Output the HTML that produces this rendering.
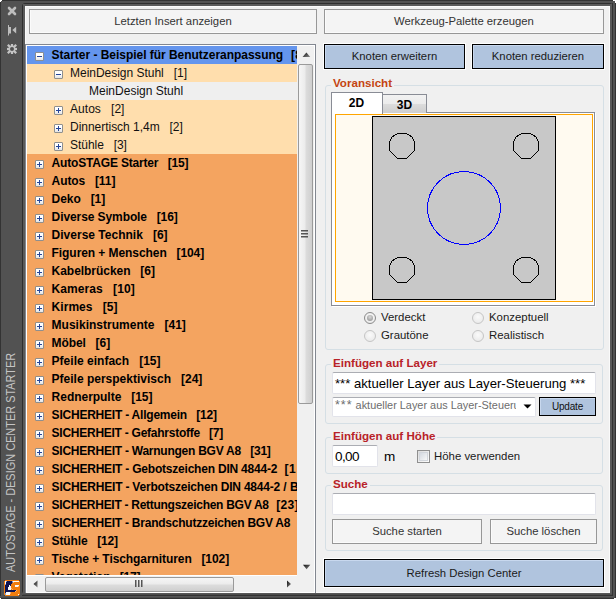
<!DOCTYPE html>
<html><head><meta charset="utf-8">
<style>
*{margin:0;padding:0;box-sizing:border-box}
html,body{width:616px;height:599px;overflow:hidden;background:#fff}
body{position:relative;font-family:"Liberation Sans",sans-serif}
.abs{position:absolute}
#frame{position:absolute;left:0;top:0;width:616px;height:599px;background:#525252;border-radius:4px 4px 0 4px}
#strip{position:absolute;left:0;top:0;width:22px;height:599px;background:#525252;border-left:1px solid #3a3a3a;border-top:1px solid #333;border-top-left-radius:3px}
#panel{position:absolute;left:25px;top:6px;width:585px;height:587px;background:#f0f0f0;border:1px solid #fafafa}
.fr{position:absolute}
/* buttons */
.btn{position:absolute;border:1px solid #979797;background:#f4f4f4;box-shadow:inset 1px 0 0 #fbfbfb,inset 0 -1px 0 #fbfbfb;color:#333;font-size:11.3px;text-align:center;white-space:nowrap}
.bbtn{position:absolute;border:1px solid #000;background:#b0c4de;box-shadow:0 0 0 1px #fff, inset 1px 1px 0 #c8d8ee;color:#1a1a1a;font-size:11.3px;text-align:center;white-space:nowrap}
/* tree */
#tree{position:absolute;left:25px;top:44px;width:291px;height:549px;border:1px solid #828790;border-bottom:none;background:#fff;overflow:hidden}
#tree .inner{position:absolute;left:1px;top:1px;width:270px;height:529px;overflow:hidden;background:#fff}
.row{position:absolute;left:0;width:270px;height:18px;white-space:pre}
.rsel{background:#6495ed}
.rlo{background:#ffdead}
.rgray{background:#efefef}
.ror{background:#f4a460}
.t{position:absolute;top:0;line-height:18px;color:#000}
.t.b{font-weight:bold;font-size:12px}
.t.n{font-size:12px;color:#111}
.ex{position:absolute;top:6px;width:9px;height:9px;border:1px solid #8e8f8f;border-radius:1px;background:linear-gradient(#fff,#fff 40%,#e4e4e4)}
.ex .h{position:absolute;left:1px;top:3px;width:5px;height:1px;background:#24459a}
.ex .v{position:absolute;left:3px;top:1px;width:1px;height:5px;background:#24459a}
/* scrollbars */
#vs{position:absolute;left:271px;top:1px;width:17px;height:530px;background:#f0f0f0}
#hs{position:absolute;left:1px;top:531px;width:270px;height:16px;background:#f0f0f0}
#corner{position:absolute;left:271px;top:531px;width:17px;height:16px;background:#f0f0f0}
.thumbv{position:absolute;left:1px;width:15px;border:1px solid #9a9a9a;border-radius:2px;background:linear-gradient(90deg,#f6f6f6,#ececec 45%,#dcdcdc 55%,#cfcfcf)}
.thumbh{position:absolute;top:1px;height:15px;border:1px solid #9a9a9a;border-radius:2px;background:linear-gradient(#f6f6f6,#ececec 45%,#dcdcdc 55%,#cfcfcf)}
/* group boxes */
.grp{position:absolute;border:1px solid #d5dfe5;border-radius:3px}
.glab{position:absolute;font-weight:bold;font-size:11.6px;background:#f0f0f0;padding:0 2px;white-space:nowrap;line-height:14px}
.tb{position:absolute;background:#fff;border:1px solid #e2e3ea;border-top-color:#abadb3;border-radius:2px}
.lbl{position:absolute;font-size:11.4px;color:#1a1a1a;white-space:nowrap;line-height:14px}
.radio{position:absolute;width:12px;height:12px;border-radius:50%;border:1px solid #c5c5c5;background:radial-gradient(circle at 50% 40%,#fafafa,#e6e6e6)}
</style></head><body>
<div id="frame"></div>
<!-- frame lines -->
<div class="fr" style="left:0;top:0;width:616px;height:1px;background:#333"></div>
<div class="fr" style="left:0;top:0;width:1px;height:599px;background:#333"></div>
<div class="fr" style="left:22px;top:3px;width:591px;height:591px;border:1px solid #2e2e2e;border-radius:3px 3px 3px 3px"></div>
<div class="fr" style="left:23px;top:4px;width:589px;height:589px;border:2px solid #5a5a5a;border-width:2px 2px 1px 2px"></div>
<div class="fr" style="left:23px;top:593px;width:589px;height:1px;background:#585858"></div>
<div class="fr" style="left:23px;top:594px;width:589px;height:1px;background:#4c4c4c"></div>
<div class="fr" style="left:22px;top:595px;width:591px;height:1px;background:#333"></div>
<div class="fr" style="left:0;top:596px;width:616px;height:1px;background:#555"></div>
<div class="fr" style="left:0;top:597px;width:616px;height:1px;background:#4a4a4a"></div>
<div class="fr" style="left:0;top:598px;width:616px;height:1px;background:#333"></div>
<div class="fr" style="left:612px;top:3px;width:1px;height:593px;background:#333"></div>
<div class="fr" style="left:615px;top:0;width:1px;height:599px;background:#333"></div>
<!-- white corner pixels -->
<div class="fr" style="left:0;top:0;width:2px;height:1px;background:#fff"></div>
<div class="fr" style="left:0;top:0;width:1px;height:2px;background:#fff"></div>
<div class="fr" style="left:613px;top:0;width:3px;height:1px;background:#fff"></div>
<div class="fr" style="left:615px;top:0;width:1px;height:3px;background:#fff"></div>
<div class="fr" style="left:614px;top:598px;width:2px;height:1px;background:#fff"></div>
<div class="fr" style="left:0;top:598px;width:1px;height:1px;background:#fff"></div>

<!-- strip icons -->
<svg class="abs" style="left:0;top:0" width="22" height="60">
 <g stroke="#bdbdbd" stroke-width="2.6" stroke-linecap="round">
  <line x1="9" y1="8" x2="15" y2="14"/><line x1="15" y1="8" x2="9" y2="14"/>
 </g>
 <rect x="10.5" y="9.5" width="3" height="3" fill="#bdbdbd"/>
 <rect x="8" y="25" width="1" height="10.5" fill="#bdbdbd"/>
 <rect x="8" y="27" width="3" height="6.5" fill="#bdbdbd"/>
 <polygon points="16.2,26.8 16.2,33.5 12.3,30.1" fill="#bdbdbd"/>
 <g fill="none" stroke="#c4c4c4" stroke-width="1.4">
  <circle cx="12" cy="49" r="2.7"/>
 </g>
 <g stroke="#c4c4c4" stroke-width="2.2" stroke-linecap="butt">
  <line x1="12" y1="44" x2="12" y2="46.5"/><line x1="12" y1="51.5" x2="12" y2="54"/>
  <line x1="7" y1="49" x2="9.5" y2="49"/><line x1="14.5" y1="49" x2="17" y2="49"/>
  <line x1="7.8" y1="44.8" x2="10.1" y2="47.1"/><line x1="13.9" y1="50.9" x2="16.2" y2="53.2"/>
  <line x1="16.2" y1="44.8" x2="13.9" y2="47.1"/><line x1="10.1" y1="50.9" x2="7.8" y2="53.2"/>
 </g>
</svg>
<div class="abs" style="left:5px;top:572px;width:0;height:0">
 <div style="position:absolute;left:0;top:0;transform-origin:0 0;transform:rotate(-90deg) scaleX(0.875);font-size:12.5px;color:#c4c4c4;white-space:nowrap;line-height:12px;top:0">AUTOSTAGE - DESIGN CENTER STARTER</div>
</div>
<!-- logo -->
<svg class="abs" style="left:4px;top:580px" width="16" height="16" shape-rendering="crispEdges"><rect x="0" y="0" width="1" height="1" fill="#3a4450"/><rect x="1" y="0" width="14" height="1" fill="#f07d0e"/><rect x="15" y="0" width="1" height="1" fill="#3a4450"/><rect x="0" y="1" width="1" height="1" fill="#f07d0e"/><rect x="1" y="1" width="1" height="1" fill="#fbfbfb"/><rect x="2" y="1" width="1" height="1" fill="#8aa4d4"/><rect x="3" y="1" width="5" height="1" fill="#0e1452"/><rect x="8" y="1" width="1" height="1" fill="#8aa4d4"/><rect x="9" y="1" width="6" height="1" fill="#fbfbfb"/><rect x="15" y="1" width="1" height="1" fill="#f07d0e"/><rect x="0" y="2" width="1" height="1" fill="#f07d0e"/><rect x="1" y="2" width="1" height="1" fill="#fbfbfb"/><rect x="2" y="2" width="6" height="1" fill="#0e1452"/><rect x="8" y="2" width="1" height="1" fill="#5a5f8a"/><rect x="9" y="2" width="1" height="1" fill="#f6b070"/><rect x="10" y="2" width="6" height="1" fill="#f07d0e"/><rect x="0" y="3" width="1" height="1" fill="#f07d0e"/><rect x="1" y="3" width="1" height="1" fill="#fbfbfb"/><rect x="2" y="3" width="6" height="1" fill="#0e1452"/><rect x="8" y="3" width="8" height="1" fill="#f07d0e"/><rect x="0" y="4" width="1" height="1" fill="#f07d0e"/><rect x="1" y="4" width="1" height="1" fill="#8aa4d4"/><rect x="2" y="4" width="5" height="1" fill="#0e1452"/><rect x="7" y="4" width="9" height="1" fill="#f07d0e"/><rect x="0" y="5" width="1" height="1" fill="#f07d0e"/><rect x="1" y="5" width="4" height="1" fill="#0e1452"/><rect x="5" y="5" width="1" height="1" fill="#fbfbfb"/><rect x="6" y="5" width="1" height="1" fill="#0e1452"/><rect x="7" y="5" width="4" height="1" fill="#f07d0e"/><rect x="11" y="5" width="4" height="1" fill="#fbfbfb"/><rect x="15" y="5" width="1" height="1" fill="#f07d0e"/><rect x="0" y="6" width="1" height="1" fill="#f07d0e"/><rect x="1" y="6" width="4" height="1" fill="#0e1452"/><rect x="5" y="6" width="2" height="1" fill="#fbfbfb"/><rect x="7" y="6" width="4" height="1" fill="#f07d0e"/><rect x="11" y="6" width="3" height="1" fill="#fbfbfb"/><rect x="14" y="6" width="1" height="1" fill="#f6b070"/><rect x="15" y="6" width="1" height="1" fill="#f07d0e"/><rect x="0" y="7" width="1" height="1" fill="#f07d0e"/><rect x="1" y="7" width="3" height="1" fill="#0e1452"/><rect x="4" y="7" width="3" height="1" fill="#fbfbfb"/><rect x="7" y="7" width="9" height="1" fill="#f07d0e"/><rect x="0" y="8" width="1" height="1" fill="#f07d0e"/><rect x="1" y="8" width="3" height="1" fill="#0e1452"/><rect x="4" y="8" width="3" height="1" fill="#fbfbfb"/><rect x="7" y="8" width="1" height="1" fill="#f6b070"/><rect x="8" y="8" width="8" height="1" fill="#f07d0e"/><rect x="0" y="9" width="1" height="1" fill="#f07d0e"/><rect x="1" y="9" width="3" height="1" fill="#0e1452"/><rect x="4" y="9" width="3" height="1" fill="#fbfbfb"/><rect x="7" y="9" width="1" height="1" fill="#f07d0e"/><rect x="8" y="9" width="1" height="1" fill="#f6b070"/><rect x="9" y="9" width="7" height="1" fill="#f07d0e"/><rect x="0" y="10" width="1" height="1" fill="#f07d0e"/><rect x="1" y="10" width="11" height="1" fill="#0e1452"/><rect x="12" y="10" width="1" height="1" fill="#f6b070"/><rect x="13" y="10" width="3" height="1" fill="#f07d0e"/><rect x="0" y="11" width="1" height="1" fill="#f07d0e"/><rect x="1" y="11" width="10" height="1" fill="#0e1452"/><rect x="11" y="11" width="1" height="1" fill="#f6b070"/><rect x="12" y="11" width="4" height="1" fill="#f07d0e"/><rect x="0" y="12" width="1" height="1" fill="#f07d0e"/><rect x="1" y="12" width="1" height="1" fill="#0e1452"/><rect x="2" y="12" width="4" height="1" fill="#fbfbfb"/><rect x="6" y="12" width="1" height="1" fill="#f6b070"/><rect x="7" y="12" width="9" height="1" fill="#f07d0e"/><rect x="0" y="13" width="1" height="1" fill="#f07d0e"/><rect x="1" y="13" width="1" height="1" fill="#8aa4d4"/><rect x="2" y="13" width="4" height="1" fill="#fbfbfb"/><rect x="6" y="13" width="1" height="1" fill="#f6b070"/><rect x="7" y="13" width="9" height="1" fill="#f07d0e"/><rect x="0" y="14" width="1" height="1" fill="#f07d0e"/><rect x="1" y="14" width="1" height="1" fill="#8aa4d4"/><rect x="2" y="14" width="4" height="1" fill="#fbfbfb"/><rect x="6" y="14" width="8" height="1" fill="#f07d0e"/><rect x="14" y="14" width="1" height="1" fill="#fbfbfb"/><rect x="15" y="14" width="1" height="1" fill="#f07d0e"/><rect x="0" y="15" width="1" height="1" fill="#3a4450"/><rect x="1" y="15" width="14" height="1" fill="#f07d0e"/><rect x="15" y="15" width="1" height="1" fill="#3a4450"/></svg>

<div id="panel"></div>

<!-- top buttons -->
<div class="btn" style="left:29px;top:9px;width:288px;height:25px;line-height:23px">Letzten Insert anzeigen</div>
<div class="btn" style="left:324px;top:9px;width:280px;height:25px;line-height:23px">Werkzeug-Palette erzeugen</div>

<!-- tree -->
<div id="tree">
 <div class="inner">
<div class="row rsel" style="top:0px"><i class="ex" style="left:8px"><i class="h"></i></i><span class="t b" style="left:24.6px;letter-spacing:-0.029px">Starter - Beispiel für Benutzeranpassung</span><span class="t b" style="left:264.0px;letter-spacing:0.3px">[8]</span></div>
<div class="row rlo" style="top:18px"><i class="ex" style="left:27px"><i class="h"></i></i><span class="t n" style="left:43.0px;letter-spacing:-0.018px">MeinDesign Stuhl   [1]</span></div>
<div class="row rgray" style="top:36px"><span class="t n" style="left:62.0px;letter-spacing:0.006px">MeinDesign Stuhl</span></div>
<div class="row rlo" style="top:54px"><i class="ex" style="left:27px"><i class="h"></i><i class="v"></i></i><span class="t n" style="left:43.0px;letter-spacing:0.04px">Autos   [2]</span></div>
<div class="row rlo" style="top:72px"><i class="ex" style="left:27px"><i class="h"></i><i class="v"></i></i><span class="t n" style="left:43.0px;letter-spacing:-0.027px">Dinnertisch 1,4m   [2]</span></div>
<div class="row rlo" style="top:90px"><i class="ex" style="left:27px"><i class="h"></i><i class="v"></i></i><span class="t n" style="left:43.0px;letter-spacing:-0.042px">Stühle   [3]</span></div>
<div class="row ror" style="top:108px"><i class="ex" style="left:8px"><i class="h"></i><i class="v"></i></i><span class="t b" style="left:24.6px;letter-spacing:-0.179px">AutoSTAGE Starter   [15]</span></div>
<div class="row ror" style="top:126px"><i class="ex" style="left:8px"><i class="h"></i><i class="v"></i></i><span class="t b" style="left:24.6px;letter-spacing:-0.08px">Autos   [11]</span></div>
<div class="row ror" style="top:144px"><i class="ex" style="left:8px"><i class="h"></i><i class="v"></i></i><span class="t b" style="left:24.6px;letter-spacing:-0.04px">Deko   [1]</span></div>
<div class="row ror" style="top:162px"><i class="ex" style="left:8px"><i class="h"></i><i class="v"></i></i><span class="t b" style="left:24.6px;letter-spacing:-0.091px">Diverse Symbole   [16]</span></div>
<div class="row ror" style="top:180px"><i class="ex" style="left:8px"><i class="h"></i><i class="v"></i></i><span class="t b" style="left:24.6px;letter-spacing:0.01px">Diverse Technik   [6]</span></div>
<div class="row ror" style="top:198px"><i class="ex" style="left:8px"><i class="h"></i><i class="v"></i></i><span class="t b" style="left:24.6px;letter-spacing:-0.071px">Figuren + Menschen   [104]</span></div>
<div class="row ror" style="top:216px"><i class="ex" style="left:8px"><i class="h"></i><i class="v"></i></i><span class="t b" style="left:24.6px;letter-spacing:-0.044px">Kabelbrücken   [6]</span></div>
<div class="row ror" style="top:234px"><i class="ex" style="left:8px"><i class="h"></i><i class="v"></i></i><span class="t b" style="left:24.6px;letter-spacing:0.079px">Kameras   [10]</span></div>
<div class="row ror" style="top:252px"><i class="ex" style="left:8px"><i class="h"></i><i class="v"></i></i><span class="t b" style="left:24.6px;letter-spacing:0.042px">Kirmes   [5]</span></div>
<div class="row ror" style="top:270px"><i class="ex" style="left:8px"><i class="h"></i><i class="v"></i></i><span class="t b" style="left:24.6px;letter-spacing:0.009px">Musikinstrumente   [41]</span></div>
<div class="row ror" style="top:288px"><i class="ex" style="left:8px"><i class="h"></i><i class="v"></i></i><span class="t b" style="left:24.6px;letter-spacing:-0.08px">Möbel   [6]</span></div>
<div class="row ror" style="top:306px"><i class="ex" style="left:8px"><i class="h"></i><i class="v"></i></i><span class="t b" style="left:24.6px;letter-spacing:0.01px">Pfeile einfach   [15]</span></div>
<div class="row ror" style="top:324px"><i class="ex" style="left:8px"><i class="h"></i><i class="v"></i></i><span class="t b" style="left:24.6px;letter-spacing:0.0px">Pfeile perspektivisch   [24]</span></div>
<div class="row ror" style="top:342px"><i class="ex" style="left:8px"><i class="h"></i><i class="v"></i></i><span class="t b" style="left:24.6px;letter-spacing:-0.028px">Rednerpulte   [15]</span></div>
<div class="row ror" style="top:360px"><i class="ex" style="left:8px"><i class="h"></i><i class="v"></i></i><span class="t b" style="left:24.6px;letter-spacing:-0.221px">SICHERHEIT - Allgemein   [12]</span></div>
<div class="row ror" style="top:378px"><i class="ex" style="left:8px"><i class="h"></i><i class="v"></i></i><span class="t b" style="left:24.6px;letter-spacing:-0.257px">SICHERHEIT - Gefahrstoffe   [7]</span></div>
<div class="row ror" style="top:396px"><i class="ex" style="left:8px"><i class="h"></i><i class="v"></i></i><span class="t b" style="left:24.6px;letter-spacing:-0.244px">SICHERHEIT - Warnungen BGV A8   [31]</span></div>
<div class="row ror" style="top:414px"><i class="ex" style="left:8px"><i class="h"></i><i class="v"></i></i><span class="t b" style="left:24.6px;letter-spacing:-0.211px">SICHERHEIT - Gebotszeichen DIN 4844-2</span><span class="t b" style="left:257.6px;letter-spacing:0.3px">[1</span></div>
<div class="row ror" style="top:432px"><i class="ex" style="left:8px"><i class="h"></i><i class="v"></i></i><span class="t b" style="left:24.6px;letter-spacing:-0.2px">SICHERHEIT - Verbotszeichen DIN 4844-2 /</span><span class="t b" style="left:263.1px;letter-spacing:0.3px">BGV A8   [20]</span></div>
<div class="row ror" style="top:450px"><i class="ex" style="left:8px"><i class="h"></i><i class="v"></i></i><span class="t b" style="left:24.6px;letter-spacing:-0.279px">SICHERHEIT - Rettungszeichen BGV A8</span><span class="t b" style="left:249.3px;letter-spacing:0.3px">[23]</span></div>
<div class="row ror" style="top:468px"><i class="ex" style="left:8px"><i class="h"></i><i class="v"></i></i><span class="t b" style="left:24.6px;letter-spacing:-0.236px">SICHERHEIT - Brandschutzzeichen BGV A8</span><span class="t b" style="left:270.3px;letter-spacing:0.3px">[9]</span></div>
<div class="row ror" style="top:486px"><i class="ex" style="left:8px"><i class="h"></i><i class="v"></i></i><span class="t b" style="left:24.6px;letter-spacing:-0.125px">Stühle   [12]</span></div>
<div class="row ror" style="top:504px"><i class="ex" style="left:8px"><i class="h"></i><i class="v"></i></i><span class="t b" style="left:24.6px;letter-spacing:-0.078px">Tische + Tischgarnituren   [102]</span></div>
<div class="row ror" style="top:522px"><i class="ex" style="left:8px"><i class="h"></i><i class="v"></i></i><span class="t b" style="left:24.6px;letter-spacing:-0.2px">Vegetation   [17]</span></div>
 </div>
 <div id="vs">
  <svg class="abs" style="left:0;top:0" width="17" height="17"><defs><linearGradient id="ag" x1="0" y1="0" x2="1" y2="1"><stop offset="0" stop-color="#111"/><stop offset="1" stop-color="#8a8a8a"/></linearGradient></defs><polygon points="5.6,11 13.2,11 9.4,6.6" fill="url(#ag)"/></svg>
  <div class="thumbv" style="top:18px;height:340px"></div>
  <svg class="abs" style="left:4px;top:184px" width="8" height="8"><rect x="0" y="0" width="7" height="1.5" fill="#555"/><rect x="0" y="3" width="7" height="1.5" fill="#555"/><rect x="0" y="6" width="7" height="1.5" fill="#555"/></svg>
  <svg class="abs" style="left:0;top:513px" width="17" height="17"><polygon points="6,5.8 13.3,5.8 9.6,10.3" fill="url(#ag)"/></svg>
 </div>
 <div id="hs">
  <svg class="abs" style="left:0;top:0" width="17" height="16"><polygon points="10.5,4.5 10.5,11.5 6.5,8" fill="url(#ag)"/></svg>
  <div class="thumbh" style="left:18px;width:189px"></div>
  <svg class="abs" style="left:108px;top:4px" width="8" height="8"><rect x="0" y="0" width="1.5" height="7" fill="#555"/><rect x="3" y="0" width="1.5" height="7" fill="#555"/><rect x="6" y="0" width="1.5" height="7" fill="#555"/></svg>
  <svg class="abs" style="left:253px;top:0" width="17" height="16"><polygon points="7,4.5 7,11.5 11,8" fill="url(#ag)"/></svg>
 </div>
 <div id="corner"></div>
</div>

<!-- Knoten buttons -->
<div class="bbtn" style="left:324px;top:44px;width:141px;height:25px;line-height:23px">Knoten erweitern</div>
<div class="bbtn" style="left:472px;top:44px;width:132px;height:25px;line-height:23px">Knoten reduzieren</div>

<!-- Voransicht group -->
<div class="grp" style="left:325px;top:85px;width:279px;height:265px"></div>
<div class="glab" style="left:331px;top:76px;color:#c44410">Voransicht</div>
<!-- tab page -->
<div class="abs" style="left:331px;top:112px;width:264px;height:194px;border:1px solid #898c95;background:#fff;box-shadow:1px 1px 0 #fff"></div>
<div class="abs" style="left:382px;top:94px;width:45px;height:19px;border:1px solid #898c95;border-bottom:none;background:linear-gradient(#f2f2f2,#ebebeb 50%,#dcdcdc 51%,#cfcfcf)"></div>
<div class="abs" style="left:331px;top:92px;width:52px;height:22px;border:1px solid #898c95;border-bottom:none;background:#fff"></div>
<div class="abs" style="left:331px;top:97px;width:51px;text-align:center;font-weight:bold;font-size:12px;line-height:12px;color:#000">2D</div>
<div class="abs" style="left:382px;top:99px;width:45px;text-align:center;font-weight:bold;font-size:12px;line-height:12px;color:#000">3D</div>
<!-- preview -->
<div class="abs" style="left:335px;top:114px;width:258px;height:188px;border:1px solid #ffa500;background:#fffaf0"></div>
<svg class="abs" style="left:372px;top:116px" width="184" height="184">
 <rect x="0.5" y="0.5" width="183" height="183" fill="#c8c8c8" stroke="#000" stroke-width="1"/>
 <g fill="none" stroke="#000" stroke-width="1" shape-rendering="crispEdges"><polygon points="25.5,17.5 34.5,17.5 37.5,19.5 39.5,20.5 42.5,25.5 42.5,34.5 34.5,42.5 25.5,42.5 17.5,34.5 17.5,25.5 20.5,20.5 22.5,19.5"/><polygon points="149.5,17.5 158.5,17.5 161.5,19.5 163.5,20.5 166.5,25.5 166.5,34.5 158.5,42.5 149.5,42.5 141.5,34.5 141.5,25.5 144.5,20.5 146.5,19.5"/><polygon points="25.5,141.5 34.5,141.5 37.5,143.5 39.5,144.5 42.5,149.5 42.5,158.5 34.5,166.5 25.5,166.5 17.5,158.5 17.5,149.5 20.5,144.5 22.5,143.5"/><polygon points="149.5,141.5 158.5,141.5 161.5,143.5 163.5,144.5 166.5,149.5 166.5,158.5 158.5,166.5 149.5,166.5 141.5,158.5 141.5,149.5 144.5,144.5 146.5,143.5"/></g>
 <circle cx="92" cy="92" r="36.5" fill="none" stroke="#0000ff" stroke-width="1" shape-rendering="crispEdges"/>
</svg>
<!-- radios -->
<div class="radio" style="left:364px;top:312px;border-color:#8a8a8a"><div style="position:absolute;left:2px;top:2px;width:6px;height:6px;border-radius:50%;background:radial-gradient(circle at 50% 35%,#d8d8d8,#8a8a8a)"></div></div>
<div class="lbl" style="left:381px;top:310px">Verdeckt</div>
<div class="radio" style="left:364px;top:330px"></div>
<div class="lbl" style="left:381px;top:328px">Grautöne</div>
<div class="radio" style="left:472px;top:312px"></div>
<div class="lbl" style="left:489px;top:310px">Konzeptuell</div>
<div class="radio" style="left:472px;top:330px"></div>
<div class="lbl" style="left:489px;top:328px">Realistisch</div>

<!-- Einfuegen auf Layer -->
<div class="grp" style="left:325px;top:364px;width:278px;height:60px"></div>
<div class="glab" style="left:331px;top:356px;color:#b82228">Einfügen auf Layer</div>
<div class="tb" style="left:332px;top:372px;width:264px;height:22px"></div>
<div class="abs" style="left:335px;top:376px;font-size:13.14px;line-height:15px;color:#000;white-space:nowrap">*** aktueller Layer aus Layer-Steuerung ***</div>
<div class="tb" style="left:332px;top:397px;width:204px;height:20px;overflow:hidden"></div>
<div class="abs" style="left:335px;top:398px;width:181px;overflow:hidden;font-size:10.9px;line-height:15px;color:#6d6d6d;white-space:nowrap"><span style="letter-spacing:1px;font-size:12.5px">***</span> aktueller Layer aus Layer-Steuerung</div>
<svg class="abs" style="left:523px;top:404px" width="10" height="6"><polygon points="0.5,0.5 8.5,0.5 4.5,4.5" fill="#000"/></svg>
<div class="bbtn" style="left:539px;top:397px;width:57px;height:19px;line-height:17px;font-size:10px;letter-spacing:-0.2px;color:#111;box-shadow:inset 1px 1px 0 #c8d8ee">Update</div>

<!-- Einfuegen auf Hoehe -->
<div class="grp" style="left:325px;top:437px;width:278px;height:37px"></div>
<div class="glab" style="left:331px;top:429px;color:#b82228">Einfügen auf Höhe</div>
<div class="tb" style="left:332px;top:445px;width:46px;height:22px"></div>
<div class="abs" style="left:335px;top:449px;font-size:13.5px;line-height:15px;color:#000;white-space:nowrap;letter-spacing:-0.6px">0,00</div>
<div class="abs" style="left:384px;top:449px;font-size:13.5px;line-height:15px;color:#000;white-space:nowrap">m</div>
<div class="abs" style="left:417px;top:450px;width:13px;height:13px;border:1px solid #8f8f8f;background:linear-gradient(135deg,#dcdcdc,#fdfdfd)"><div style="position:absolute;left:1px;top:1px;width:9px;height:9px;border:1px solid #d2d6dc;background:linear-gradient(135deg,#d4d9e0,#f8f8f8)"></div></div>
<div class="lbl" style="left:434px;top:449px">Höhe verwenden</div>

<!-- Suche -->
<div class="grp" style="left:325px;top:485px;width:278px;height:66px"></div>
<div class="glab" style="left:331px;top:477px;color:#b82228">Suche</div>
<div class="tb" style="left:332px;top:493px;width:264px;height:22px"></div>
<div class="btn" style="left:332px;top:519px;width:150px;height:25px;line-height:23px">Suche starten</div>
<div class="btn" style="left:490px;top:519px;width:107px;height:25px;line-height:23px">Suche löschen</div>

<!-- Refresh -->
<div class="bbtn" style="left:324px;top:559px;width:280px;height:28px;line-height:26px">Refresh Design Center</div>
</body></html>
